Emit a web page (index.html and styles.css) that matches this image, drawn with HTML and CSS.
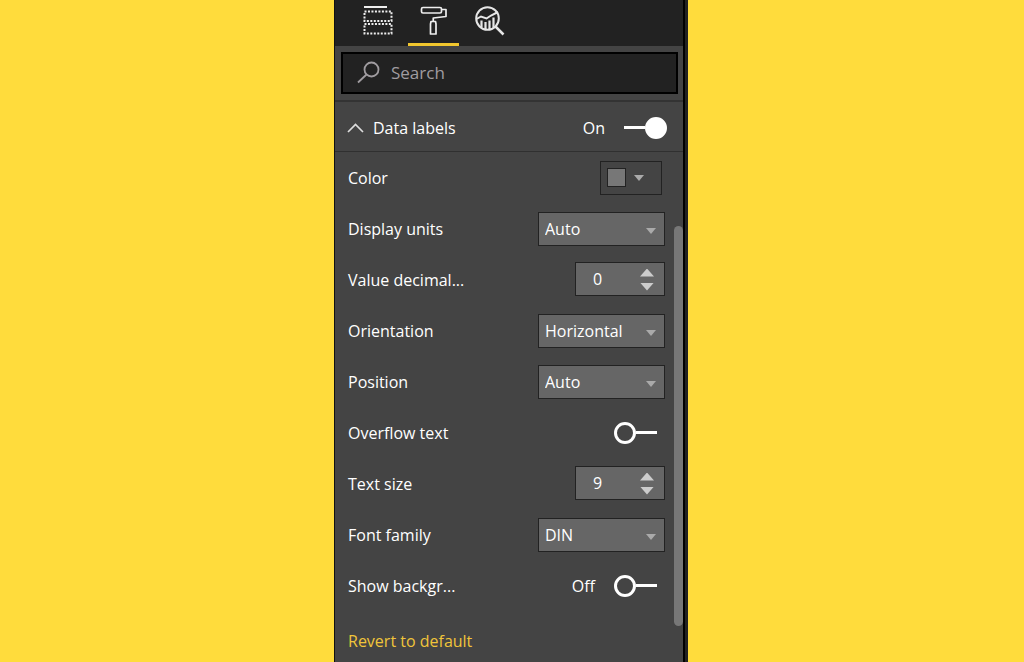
FILE: index.html
```html
<!DOCTYPE html>
<html lang="en">
<head>
<meta charset="utf-8">
<title>Format pane</title>
<link rel="stylesheet" href="styles.css">
</head>
<body class="page">
<main class="panel">
  <nav class="tabs" aria-label="Pane tabs">
    <button class="tab" type="button" aria-label="Fields">
      <svg class="tab-icon" viewBox="0 0 30 30" fill="none" stroke="#eee" stroke-width="2">
        <path d="M1 1H24"/>
        <rect x="1.500" y="5.500" width="27" height="9.500" stroke-dasharray="2 1.480"/>
        <rect x="1.500" y="18" width="27" height="9.500" stroke-dasharray="2 1.480"/>
      </svg>
    </button>
    <button class="tab tab-active" type="button" aria-label="Format">
      <svg class="tab-icon" viewBox="0 0 30 30" fill="none" stroke="#eee" stroke-width="1.7" stroke-linejoin="round">
        <rect x="2.500" y="1.500" width="20" height="5.500" rx="1.500"/>
        <path d="M22.500 3.500H27V10.500L14.250 12V15"/>
        <path d="M12 15.500H16.500L17 18V28H11.500V18Z"/>
      </svg>
    </button>
    <button class="tab" type="button" aria-label="Analytics">
      <svg class="tab-icon" viewBox="0 0 30 30" fill="none" stroke="#e6e6e6" stroke-width="2">
        <circle cx="12.500" cy="12.500" r="11.300"/>
        <path d="M20.500 20.500L28.500 28.500" stroke-width="2.500"/>
        <path d="M1.500 13L6 10.500L11.500 12.500L16 9.500L23 6"/>
        <path d="M6.500 14.500V21M10.500 16V24M14.500 14.500V24M18.500 11.500V21.500" stroke-width="2.200"/>
      </svg>
    </button>
  </nav>
  <div class="search-area">
    <label class="search">
      <svg class="search-icon" viewBox="0 0 24 24" fill="none" stroke="#a09ca0" stroke-width="1.800">
        <circle cx="14.500" cy="8.500" r="7"/>
        <path d="M9.500 13.500L1 21.500"/>
      </svg>
      <input class="search-input" type="text" placeholder="Search" aria-label="Search">
    </label>
  </div>
  <header class="section">
    <button class="section-toggle" type="button" aria-expanded="true">
      <svg class="chevron" viewBox="0 0 17 10" fill="none" stroke="#ddd" stroke-width="1.700"><path d="M1 9L8.500 1.500L16 9"/></svg>
      Data labels
    </button>
    <label class="state" for="labels">On</label>
    <input class="switch" id="labels" type="checkbox" checked>
  </header>
  <div class="content">
    <form class="rows">
      <div class="row">
        <label class="name" for="color">Color</label>
        <button class="color" id="color" type="button" aria-label="Color"><span class="swatch"></span><span class="arrow"></span></button>
      </div>
      <div class="row">
        <label class="name" for="units">Display units</label>
        <div class="drop"><select class="field" id="units"><option>Auto</option></select></div>
      </div>
      <div class="row">
        <label class="name" for="decimals">Value decimal...</label>
        <div class="spin"><input class="field number" id="decimals" type="text" inputmode="numeric" value="0"><div class="steps"><button class="step" type="button" aria-label="More decimals"></button><button class="step step-down" type="button" aria-label="Fewer decimals"></button></div></div>
      </div>
      <div class="row">
        <label class="name" for="orientation">Orientation</label>
        <div class="drop"><select class="field" id="orientation"><option>Horizontal</option></select></div>
      </div>
      <div class="row">
        <label class="name" for="position">Position</label>
        <div class="drop"><select class="field" id="position"><option>Auto</option></select></div>
      </div>
      <div class="row row-switch">
        <label class="name" for="overflow">Overflow text</label>
        <input class="switch" id="overflow" type="checkbox">
      </div>
      <div class="row">
        <label class="name" for="size">Text size</label>
        <div class="spin"><input class="field number" id="size" type="text" inputmode="numeric" value="9"><div class="steps"><button class="step" type="button" aria-label="Larger text"></button><button class="step step-down" type="button" aria-label="Smaller text"></button></div></div>
      </div>
      <div class="row">
        <label class="name" for="family">Font family</label>
        <div class="drop"><select class="field" id="family"><option>DIN</option></select></div>
      </div>
      <div class="row row-switch">
        <label class="name" for="background">Show backgr...</label>
        <span class="state">Off</span>
        <input class="switch" id="background" type="checkbox">
      </div>
      <button class="revert" type="reset">Revert to default</button>
    </form>
    <div class="scrollbar"><div class="thumb"></div></div>
  </div>
</main>
</body>
</html>
```
FILE: styles.css
```css
* { box-sizing: border-box; }

.page {
  margin: 0;
  padding-right: 2px;
  min-height: 100vh;
  display: flex;
  justify-content: center;
  background: #ffdc3c;
  color: #fff;
  font: 16px/24px "Open Sans", "Noto Sans", sans-serif;
}

button, input, select {
  margin: 0;
  padding: 0;
  border: 0;
  background: none;
  color: inherit;
  font: inherit;
}

.panel {
  width: 354px;
  max-width: 100%;
  display: flex;
  flex-direction: column;
  background: #444;
  border-left: 1px solid #111;
  border-right: 3px solid #222;
  box-shadow: inset -2px 0 #000;
  padding-right: 2px;
}

.tabs {
  display: flex;
  gap: 5px;
  height: 46px;
  padding-left: 17px;
  background: #222;
}

.tab {
  width: 51px;
  padding-top: 6px;
  border-bottom: 3px solid transparent;
  display: flex;
  justify-content: center;
  align-items: flex-start;
}

.tab-active { border-bottom-color: #f2c72e; }
.tab-icon { width: 30px; height: 30px; }

.search-area {
  padding: 6px 5px 6px 6px;
  border-bottom: 2px solid #333;
}

.search {
  display: flex;
  align-items: center;
  gap: 10px;
  height: 42px;
  padding: 0 14px;
  background: #222;
  border: 2px solid #000;
}

.search-icon { width: 24px; height: 24px; flex: none; }
.search-input { flex: 1; min-width: 0; outline: 0; font-size: 17px; }
.search-input::placeholder { color: #a09ca0; opacity: 1; }

.section {
  display: flex;
  align-items: center;
  height: 50px;
  padding: 2px 16px 0 12px;
  border-bottom: 1px solid #303030;
}

.section-toggle {
  flex: 1;
  display: flex;
  align-items: center;
  gap: 9px;
}

.chevron { width: 17px; height: 10px; }
.state { margin-right: 19px; }

.switch {
  appearance: none;
  width: 43px;
  height: 22px;
  display: flex;
  align-items: center;
}

.switch::before {
  content: "";
  box-sizing: border-box;
  width: 22px;
  height: 22px;
  border: 3px solid #fff;
  border-radius: 50%;
}

.switch::after {
  content: "";
  flex: 1;
  height: 3px;
  background: #fff;
}

.switch:checked { flex-direction: row-reverse; }
.switch:checked::before { background: #fff; }

.content { flex: 1; display: flex; }

.rows {
  flex: 1;
  padding: 0 9px 0 13px;
}

.row {
  display: flex;
  align-items: center;
  height: 51px;
}

.row-switch { padding-right: 8px; }
.name { flex: 1; }

.color {
  display: flex;
  align-items: center;
  gap: 8px;
  width: 62px;
  height: 34px;
  margin-right: 3px;
  padding-left: 6px;
  border: 1px solid #222;
}

.swatch {
  width: 19px;
  height: 19px;
  background: #777;
  border: 1px solid #222;
}

.arrow, .drop::after {
  content: "";
  border: 5px solid transparent;
  border-top: 6px solid #aaa;
  border-bottom: 0;
}

.drop, .spin {
  position: relative;
  width: 127px;
  height: 34px;
  background: #666;
  border: 1px solid #222;
}

.drop::after {
  position: absolute;
  right: 8px;
  top: 15px;
  pointer-events: none;
}

.field {
  appearance: none;
  width: 100%;
  height: 32px;
  padding: 0 6px;
}

.spin { display: flex; width: 90px; margin-bottom: 2px; }
.number { flex: 1; min-width: 0; padding-left: 17px; }

.steps {
  display: flex;
  flex-direction: column;
  justify-content: center;
  gap: 6px;
  padding: 2px 10px 0 0;
}

.step {
  width: 14px;
  height: 8px;
  background: #ccc;
  clip-path: polygon(50% 0, 100% 100%, 0 100%);
}

.step-down { clip-path: polygon(0 0, 100% 0, 50% 100%); }

.revert {
  margin-top: 18px;
  color: #f0c53a;
}

.scrollbar { width: 9px; padding-top: 74px; }
.thumb { height: 400px; background: #777; border-radius: 5px; }
```
